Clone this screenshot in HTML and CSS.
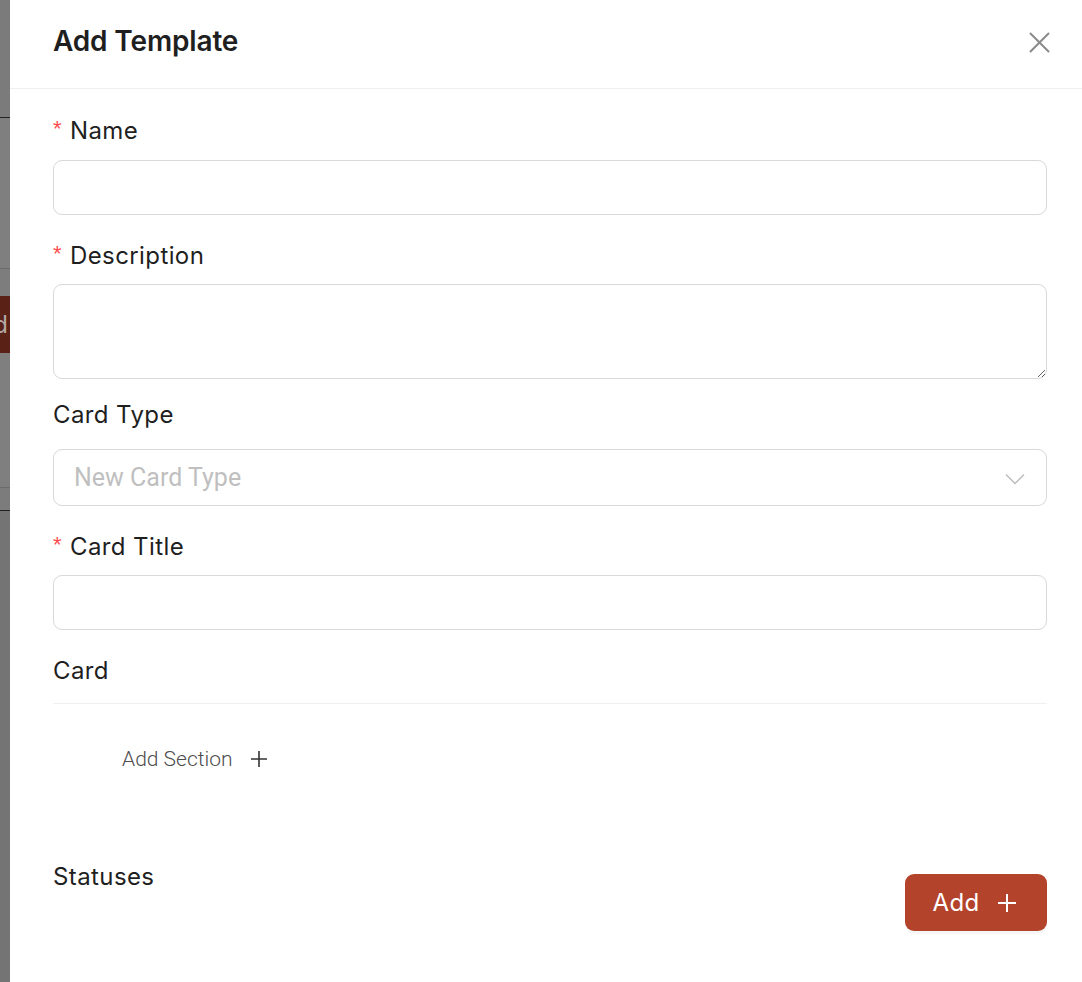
FILE: index.html
```html
<!DOCTYPE html>
<html lang="en">
<head>
<meta charset="utf-8">
<title>Add Template</title>
<link rel="stylesheet" href="styles.css">
</head>
<body>
<div class="backdrop">
  <div class="bg bg-a"></div>
  <div class="line line-dark"></div>
  <div class="bg bg-b"></div>
  <div class="line line-light"></div>
  <div class="bg bg-c"></div>
  <div class="under-btn"><span>Add</span></div>
  <div class="bg bg-d"></div>
  <div class="line line-light"></div>
  <div class="bg bg-e"></div>
  <div class="line line-dark"></div>
  <div class="bg bg-f"></div>
</div>
<div class="drawer">
  <div class="drawer-header">
    <div class="drawer-title">Add Template</div>
    <svg class="close" width="21" height="21" viewBox="0 0 21 21"><path d="M1.5 1.5 L19.5 19.5 M19.5 1.5 L1.5 19.5" stroke="#8a8a8a" stroke-width="2" fill="none" stroke-linecap="round"/></svg>
  </div>
  <div class="drawer-body">
    <div class="form-item item-name">
      <label class="label"><span class="req">*</span>Name</label>
      <input class="input" type="text">
    </div>
    <div class="form-item item-desc">
      <label class="label"><span class="req">*</span>Description</label>
      <textarea class="textarea"></textarea>
    </div>
    <div class="form-item item-type">
      <label class="label">Card Type</label>
      <div class="select">
        <span class="placeholder">New Card Type</span>
        <svg class="chevron" width="20" height="12" viewBox="0 0 20 12"><path d="M1 1.5 L10 10.5 L19 1.5" stroke="#bdbdbd" stroke-width="1.5" fill="none"/></svg>
      </div>
    </div>
    <div class="form-item item-title">
      <label class="label"><span class="req">*</span>Card Title</label>
      <input class="input" type="text">
    </div>
    <div class="card-label">Card</div>
    <div class="divider"></div>
    <div class="add-section">
      <span>Add Section</span>
      <svg width="18" height="18" viewBox="0 0 18 18"><path d="M9 1 V17 M1 9 H17" stroke="#333" stroke-width="1.6" fill="none"/></svg>
    </div>
    <div class="statuses-row">
      <div class="statuses-label">Statuses</div>
      <button class="add-btn" type="button"><span>Add</span><svg width="20" height="20" viewBox="0 0 20 20"><path d="M10 1 V19 M1 10 H19" stroke="#fff" stroke-width="2" fill="none"/></svg></button>
    </div>
  </div>
</div>
</body>
</html>
```

FILE: styles.css
```css
html, body {
  margin: 0;
  padding: 0;
}
body {
  display: flex;
  width: 1082px;
  height: 982px;
  overflow: hidden;
  background: #ffffff;
  font-family: "Inter", "Noto Sans", sans-serif;
}
.backdrop {
  width: 10px;
  flex: none;
  display: flex;
  flex-direction: column;
  background: #7a7a7a;
  overflow: hidden;
}
.bg { background: #7c7c7c; }
.bg-a { height: 117px; background: #7b7b7b; }
.bg-b { height: 150px; background: #7f7f7f; }
.bg-c { height: 27px; background: #7d7d7d; }
.bg-d { height: 134px; background: #7f7f7f; }
.bg-e { height: 22px; background: #7c7c7c; }
.bg-f { flex: 1; background: #747474; }
.line { height: 1px; flex: none; }
.line-dark { background: #222222; }
.line-light { background: #6b6b6b; }
.under-btn {
  height: 57px;
  background: #5a2116;
  display: flex;
  align-items: center;
  justify-content: flex-end;
  overflow: hidden;
  color: #b3a7a4;
  font-size: 24px;
  line-height: 1;
  white-space: nowrap;
}
.under-btn span { margin-right: 2px; }

.drawer {
  flex: 1;
  display: flex;
  flex-direction: column;
  background: #ffffff;
  min-width: 0;
}
.drawer-header {
  height: 89px;
  box-sizing: border-box;
  padding: 19px 32px 0 43px;
  border-bottom: 1px solid #f0f0f0;
  display: flex;
  justify-content: space-between;
  align-items: flex-start;
}
.drawer-title {
  font-size: 28px;
  line-height: 45px;
  font-weight: 600;
  letter-spacing: -0.15px;
  color: #1f1f1f;
}
.close { margin-top: 13px; }

.drawer-body {
  padding: 25px 35px 0 43px;
  display: flex;
  flex-direction: column;
}
.form-item {
  display: flex;
  flex-direction: column;
  margin-bottom: 24px;
}
.label {
  display: flex;
  align-items: flex-start;
  font-size: 24px;
  line-height: 34px;
  letter-spacing: 0.4px;
  color: #1f1f1f;
  margin-bottom: 12px;
}
.item-desc .label { margin-bottom: 11px; }
.item-desc { margin-bottom: 19px; }
.item-type .label { margin-bottom: 17px; }
.item-title .label { margin-bottom: 11px; }
.req {
  color: #ff4d4f;
  font-family: "Liberation Sans", sans-serif;
  font-size: 22px;
  line-height: 30px;
  margin-right: 8px;
  width: 9px;
  letter-spacing: 0;
}
.input {
  display: block;
  height: 55px;
  box-sizing: border-box;
  border: 1px solid #d9d9d9;
  border-radius: 9px;
  background: #fff;
  margin: 0;
  padding: 0 20px;
  font-size: 24px;
  outline: none;
}
.textarea {
  display: block;
  height: 95px;
  box-sizing: border-box;
  border: 1px solid #d9d9d9;
  border-radius: 9px;
  margin: 0;
  padding: 8px 20px;
  font-size: 24px;
  resize: vertical;
  outline: none;
}
.select {
  height: 57px;
  box-sizing: border-box;
  border: 1px solid #d9d9d9;
  border-radius: 9px;
  display: flex;
  align-items: center;
  justify-content: space-between;
  padding: 0 21px 0 20px;
}
.placeholder {
  font-family: "Roboto", sans-serif;
  font-size: 25px;
  color: #bfbfbf;
}
.chevron { margin-top: 2px; }
.card-label {
  font-size: 24px;
  line-height: 34px;
  letter-spacing: 0.4px;
  color: #1f1f1f;
}
.divider {
  height: 1px;
  background: #f0f0f0;
  margin-top: 15px;
}
.add-section {
  margin-top: 40px;
  margin-left: 69px;
  display: flex;
  align-items: center;
  gap: 17px;
  height: 30px;
  font-family: "Roboto", sans-serif;
  font-size: 21px;
  font-weight: 300;
  color: #4d4d4d;
}
.statuses-row {
  margin-top: 86px;
  display: flex;
  justify-content: space-between;
  align-items: flex-start;
}
.statuses-label {
  font-size: 24px;
  line-height: 34px;
  letter-spacing: 0.4px;
  color: #1f1f1f;
}
.add-btn {
  margin-top: 14px;
  width: 142px;
  height: 57px;
  border: none;
  border-radius: 9px;
  background: #b3442b;
  color: #ffffff;
  font-family: "Inter", sans-serif;
  font-size: 24px;
  letter-spacing: 0.3px;
  display: flex;
  align-items: center;
  justify-content: center;
  gap: 18px;
  padding: 0 2px 0 0;
  box-shadow: 0 3px 0 rgba(0, 0, 0, 0.03);
}
```
